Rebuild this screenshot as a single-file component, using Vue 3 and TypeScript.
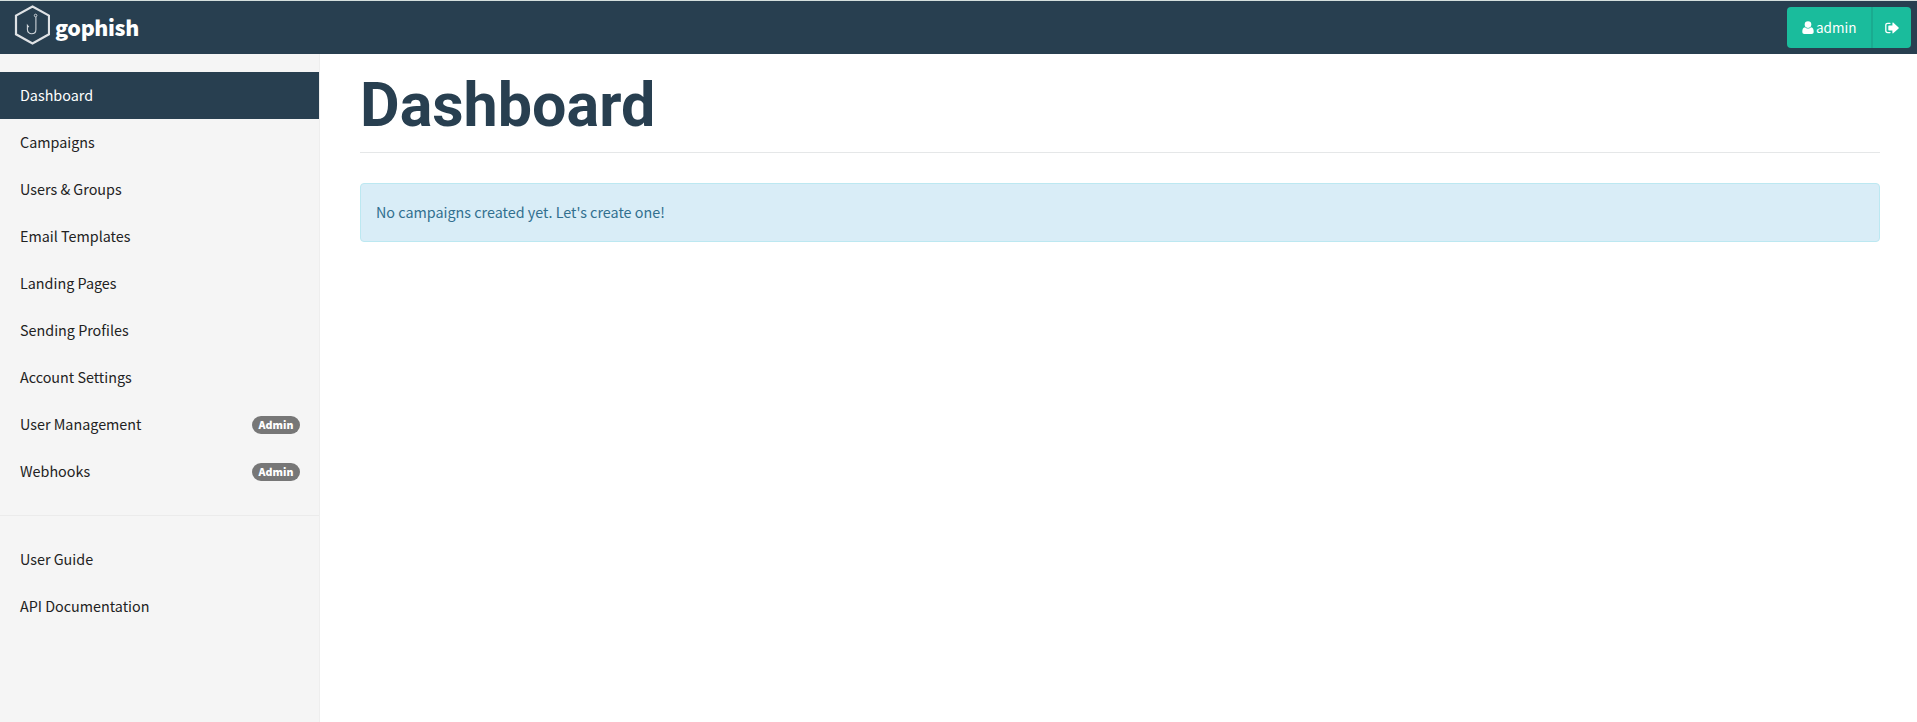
<script setup lang="ts">
interface NavItem {
  label: string
  active?: boolean
  badge?: string
}

const mainNav: NavItem[] = [
  { label: 'Dashboard', active: true },
  { label: 'Campaigns' },
  { label: 'Users & Groups' },
  { label: 'Email Templates' },
  { label: 'Landing Pages' },
  { label: 'Sending Profiles' },
  { label: 'Account Settings' },
  { label: 'User Management', badge: 'Admin' },
  { label: 'Webhooks', badge: 'Admin' },
]

const helpNav: NavItem[] = [{ label: 'User Guide' }, { label: 'API Documentation' }]
</script>

<template>
  <div class="page">
    <header class="navbar">
      <a class="brand">
        <svg class="logo" width="36" height="40" viewBox="0 0 36 40" fill="none">
          <path d="M18.5 1.5 35 10.6V29.3L18.5 38.4 2 29.3V10.6Z" stroke="#dfe2e5" stroke-width="2.2" />
          <circle cx="21.6" cy="10.5" r="1.3" stroke="#cfd5da" stroke-width="1" />
          <path d="M21.9 12V24.4C21.9 30.2 13.4 30.2 13.4 24.4V20.4L14.8 22.2" stroke="#cfd5da" stroke-width="1.1" />
        </svg>
        <span class="brand-name">gophish</span>
      </a>
      <div class="btn-group">
        <button class="btn user">
          <svg width="12" height="14" viewBox="0 0 12 14" fill="#fff">
            <circle cx="6" cy="3.6" r="3.3" />
            <path d="M3 6.2C.8 6.6.3 8.6.3 10.8.3 12.2 1.1 13 2.4 13H9.6C10.9 13 11.7 12.2 11.7 10.8 11.7 8.6 11.2 6.6 9 6.2 7.4 7.9 4.6 7.9 3 6.2Z" />
          </svg>
          <span class="user-name">admin</span>
        </button>
        <button class="btn logout" aria-label="Sign out">
          <svg width="14" height="12" viewBox="0 0 14 12" fill="#fff">
            <path d="M5 1.3H2.7C1.5 1.3.8 2 .8 3.1V8.8C.8 9.9 1.5 10.6 2.7 10.6H5" fill="none" stroke="#fff" stroke-width="1.3" stroke-linecap="round" />
            <path d="M8.2.6 13.6 5.5Q14 5.95 13.6 6.4L8.2 11.3Q7.4 11.7 7.4 10.8V8.4H4Q3.3 8.4 3.3 7.7V4.2Q3.3 3.5 4 3.5H7.4V1.1Q7.4.2 8.2.6Z" />
          </svg>
        </button>
      </div>
    </header>
    <div class="body">
      <nav class="sidebar">
        <ul>
          <li v-for="item in mainNav" :key="item.label">
            <a class="link" :class="{ active: item.active }">
              <span>{{ item.label }}</span>
              <span v-if="item.badge" class="badge">{{ item.badge }}</span>
            </a>
          </li>
        </ul>
        <hr class="divider" />
        <ul>
          <li v-for="item in helpNav" :key="item.label">
            <a class="link"><span>{{ item.label }}</span></a>
          </li>
        </ul>
      </nav>
      <main class="main">
        <h1>Dashboard</h1>
        <div class="alert">No campaigns created yet. Let's create one!</div>
      </main>
    </div>
  </div>
</template>

<style>
body {
  margin: 0;
  overflow: hidden;
}
</style>

<style scoped>
.page {
  box-sizing: border-box;
  height: 722px;
  display: flex;
  flex-direction: column;
  border-top: 1px solid #d5dfdd;
  background: #fff;
  font-family: "Noto Sans CJK SC", "Open Sans", sans-serif;
  font-size: 14.35px;
}
.navbar {
  box-sizing: border-box;
  height: 53px;
  flex: none;
  display: flex;
  justify-content: space-between;
  padding: 0 6px 0 14px;
  background: #283f50;
}
.brand {
  display: flex;
  color: #fff;
}
.logo {
  margin-top: 4px;
}
.brand-name {
  margin-left: 5px;
  font-size: 21.4px;
  font-weight: 900;
  letter-spacing: -0.35px;
  line-height: 51px;
}
.btn-group {
  display: flex;
  height: 41px;
  margin-top: 6px;
}
.btn {
  box-sizing: border-box;
  display: flex;
  align-items: center;
  padding: 0;
  border: 0;
  background: #1abc9c;
  color: #fff;
  font: inherit;
}
.user {
  width: 84px;
  padding-left: 15px;
  gap: 2px;
  border-radius: 4px 0 0 4px;
}
.user-name {
  padding-bottom: 1px;
  font-size: 13.5px;
}
.logout {
  width: 40px;
  padding-left: 12px;
  border-left: 2px solid #1aab90;
  border-radius: 0 4px 4px 0;
}
.body {
  flex: 1;
  display: flex;
}
.sidebar {
  box-sizing: border-box;
  width: 320px;
  padding-top: 18px;
  border-right: 1px solid #eee;
  background: #f5f5f5;
}
ul {
  margin: 0;
  padding: 0;
  list-style: none;
}
.link {
  box-sizing: border-box;
  display: flex;
  align-items: center;
  justify-content: space-between;
  height: 47px;
  padding: 0 19px 2px 20px;
  color: #222;
}
.link.active {
  background: #283f50;
  color: #fff;
}
.badge {
  box-sizing: border-box;
  width: 48px;
  height: 18px;
  margin-top: 2px;
  border-radius: 9px;
  background: #777;
  color: #fff;
  font-size: 10.6px;
  font-weight: 900;
  line-height: 17px;
  text-align: center;
}
.divider {
  height: 1px;
  margin: 20px 0;
  border: 0;
  background: #ebebeb;
}
.main {
  flex: 1;
  padding: 0 37px 0 40px;
}
h1 {
  box-sizing: border-box;
  height: 99px;
  margin: 0 0 30px;
  padding-top: 18px;
  border-bottom: 1px solid #e5e7e8;
  color: #283f50;
  font-family: Roboto, sans-serif;
  font-size: 61px;
  font-weight: 700;
  line-height: 67px;
}
.alert {
  box-sizing: border-box;
  height: 59px;
  padding: 0 15px;
  border: 1px solid #bce8f1;
  border-radius: 4px;
  background: #d9edf7;
  color: #31708f;
  line-height: 55px;
}
</style>
